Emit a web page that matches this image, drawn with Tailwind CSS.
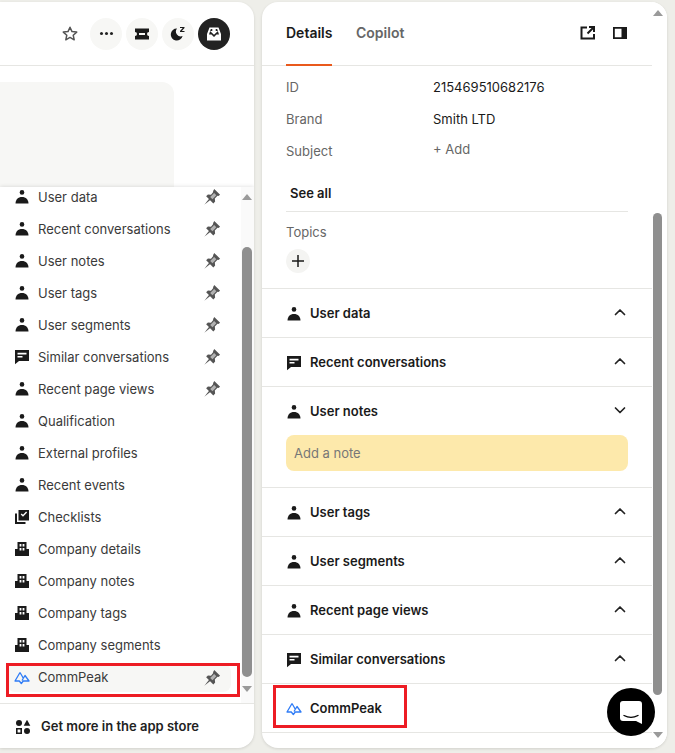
<!doctype html>
<html>
<head>
<meta charset="utf-8">
<title>Conversation details</title>
<script src="https://cdn.jsdelivr.net/npm/@tailwindcss/browser@4"></script>
</head>
<body class="w-[675px] h-[753px] overflow-hidden bg-[#eeeee9] font-['Inter',sans-serif] text-[13px] text-[#1a1a1a]">

<!-- icon sprites -->
<svg class="hidden">
  <symbol id="person" viewBox="0 0 16 16"><circle cx="8" cy="3.400" r="2.300"/><path d="M1.500 14.500c0-3.800 2.600-6.500 6.500-6.500s6.500 2.700 6.500 6.500z"/></symbol>
  <symbol id="chat" viewBox="0 0 16 16"><path fill-rule="evenodd" d="M1 1h14v11H5l-4 3.300zM3.500 3.800v1.600h9V3.800zm0 3.200v1.600h5V7z"/></symbol>
  <symbol id="company" viewBox="0 0 16 16"><path fill-rule="evenodd" d="M3.500 1h9v7H15v7H1V8h2.500zM5.600 3v2.400h1.800V3zm3 0v2.400h1.800V3zM5.600 7v2.400h1.800V7zm3 0v2.400h1.800V7z"/></symbol>
  <symbol id="check" viewBox="0 0 16 16"><path fill-rule="evenodd" d="M4.500 1H15v10.500H4.500zm8.600 2.600-1-1-3.100 3.200-1.300-1.300-1 1 2.300 2.300z"/><path d="M1 4.500h2V13h8.500v2H1z"/></symbol>
  <symbol id="pin" viewBox="0 0 16 16"><path d="M10 .8l5.200 5.200-1.500 1.100-.8-.2-2.400 2.500.3 2.700-1.600 1.600-6.400-6.400 1.600-1.600 2.700.3L9.100 3.600l-.2-.8z"/><path d="M5.800 9 1.200 14.800 7 10.200z"/><path d="M9.900 4.500 6.400 8l2 2 3.500-3.500z" fill="#fff" fill-opacity=".55"/></symbol>
  <symbol id="peak" viewBox="0 0 16 16"><path fill="none" stroke="#2f7cf6" stroke-width="1.300" stroke-linejoin="round" d="M6 2.500 1 11h4.300l2 2.500 2-2.500H15l-4-5.500-3 5M6 2.500l3.500 6"/></symbol>
  <symbol id="up" viewBox="0 0 16 16"><path fill="none" stroke="currentColor" stroke-width="1.700" stroke-linecap="round" stroke-linejoin="round" d="M3.500 10.500 8 6l4.500 4.500"/></symbol>
  <symbol id="down" viewBox="0 0 16 16"><path fill="none" stroke="currentColor" stroke-width="1.700" stroke-linecap="round" stroke-linejoin="round" d="M3.500 6 8 10.500 12.500 6"/></symbol>
</svg>

<div class="flex h-[753px] pt-[2px] pb-[5px]">

  <!-- conversation column -->
  <div class="relative w-[254px] h-[746px] bg-white rounded-r-2xl overflow-hidden shadow-[0_1px_3px_rgba(0,0,0,0.12)]">
    <div class="h-[64px] border-b border-[#e6e6e3] flex items-center justify-end gap-1 pr-6">
      <svg class="w-4 h-4 mr-2 mt-[1px]" viewBox="0 0 16 16" fill="none" stroke="#555" stroke-width="1.500" stroke-linejoin="round"><path d="M8 1.300l2 4.300 4.700.5-3.500 3.100 1 4.600L8 11.400l-4.200 2.400 1-4.600-3.500-3.100 4.700-.5z"/></svg>
      <div class="w-8 h-8 rounded-full bg-[#f7f7f5] flex items-center justify-center gap-[2px]">
        <span class="w-[3px] h-[3px] rounded-full bg-[#222]"></span><span class="w-[3px] h-[3px] rounded-full bg-[#222]"></span><span class="w-[3px] h-[3px] rounded-full bg-[#222]"></span>
      </div>
      <div class="w-8 h-8 rounded-full bg-[#f7f7f5] flex items-center justify-center">
        <svg class="w-4 h-4" viewBox="0 0 16 16" fill="#1a1a1a"><path fill-rule="evenodd" d="M1 2.500h14v3.500a2 2 0 0 0 0 4v3.500H1V10a2 2 0 0 0 0-4zM5 7v2h6V7z"/></svg>
      </div>
      <div class="w-8 h-8 rounded-full bg-[#f7f7f5] flex items-center justify-center">
        <svg class="w-4 h-4" viewBox="0 0 16 16" fill="#1a1a1a"><path d="M7 2.600A6 6 0 1 0 12.600 10 4.800 4.800 0 0 1 7 2.600z"/><path d="M10 1h4.500v1.100l-2.700 2.800h2.700V6H10V4.900l2.700-2.800H10z"/></svg>
      </div>
      <div class="w-8 h-8 rounded-full bg-[#222] flex items-center justify-center">
        <svg class="w-4 h-4" viewBox="0 0 16 16" fill="#fff"><path fill-rule="evenodd" d="M3.500 1.500h9L15 8v6.500H1V8zM4.800 3 3 8.500h2.500L8 11l2.500-2.500H13L11.200 3z"/><path d="M6.300 2.500h3.400V5H12L8 8.800 4 5h2.300z"/></svg>
      </div>
    </div>
    <div class="w-[174px] h-[300px] mt-[16px] bg-[#f7f7f5] rounded-r-xl"></div>

    <!-- apps popover -->
    <div class="absolute left-0 right-0 top-[185px] bottom-0 bg-white rounded-br-2xl shadow-[0_0_4px_rgba(0,0,0,0.15)] flex flex-col">
      <div class="h-[516px] flex overflow-hidden">
        <ul class="w-[241px] -mt-[5px] pl-[7px] pr-[10px] shrink-0">
          <li class="h-8 flex items-center pl-[7px] pr-[10px] text-[#3a3a3a]"><svg class="w-4 h-4 -mt-[3px] mr-[8px] fill-[#1a1a1a]"><use href="#person"/></svg><span class="flex-1">User data</span><svg class="w-[18px] h-[18px] -mt-[3px] fill-[#555]"><use href="#pin"/></svg></li>
          <li class="h-8 flex items-center pl-[7px] pr-[10px] text-[#3a3a3a]"><svg class="w-4 h-4 -mt-[3px] mr-[8px] fill-[#1a1a1a]"><use href="#person"/></svg><span class="flex-1">Recent conversations</span><svg class="w-[18px] h-[18px] -mt-[3px] fill-[#555]"><use href="#pin"/></svg></li>
          <li class="h-8 flex items-center pl-[7px] pr-[10px] text-[#3a3a3a]"><svg class="w-4 h-4 -mt-[3px] mr-[8px] fill-[#1a1a1a]"><use href="#person"/></svg><span class="flex-1">User notes</span><svg class="w-[18px] h-[18px] -mt-[3px] fill-[#555]"><use href="#pin"/></svg></li>
          <li class="h-8 flex items-center pl-[7px] pr-[10px] text-[#3a3a3a]"><svg class="w-4 h-4 -mt-[3px] mr-[8px] fill-[#1a1a1a]"><use href="#person"/></svg><span class="flex-1">User tags</span><svg class="w-[18px] h-[18px] -mt-[3px] fill-[#555]"><use href="#pin"/></svg></li>
          <li class="h-8 flex items-center pl-[7px] pr-[10px] text-[#3a3a3a]"><svg class="w-4 h-4 -mt-[3px] mr-[8px] fill-[#1a1a1a]"><use href="#person"/></svg><span class="flex-1">User segments</span><svg class="w-[18px] h-[18px] -mt-[3px] fill-[#555]"><use href="#pin"/></svg></li>
          <li class="h-8 flex items-center pl-[7px] pr-[10px] text-[#3a3a3a]"><svg class="w-4 h-4 -mt-[3px] mr-[8px] fill-[#1a1a1a]"><use href="#chat"/></svg><span class="flex-1">Similar conversations</span><svg class="w-[18px] h-[18px] -mt-[3px] fill-[#555]"><use href="#pin"/></svg></li>
          <li class="h-8 flex items-center pl-[7px] pr-[10px] text-[#3a3a3a]"><svg class="w-4 h-4 -mt-[3px] mr-[8px] fill-[#1a1a1a]"><use href="#person"/></svg><span class="flex-1">Recent page views</span><svg class="w-[18px] h-[18px] -mt-[3px] fill-[#555]"><use href="#pin"/></svg></li>
          <li class="h-8 flex items-center pl-[7px] pr-[10px] text-[#3a3a3a]"><svg class="w-4 h-4 -mt-[3px] mr-[8px] fill-[#1a1a1a]"><use href="#person"/></svg><span class="flex-1">Qualification</span></li>
          <li class="h-8 flex items-center pl-[7px] pr-[10px] text-[#3a3a3a]"><svg class="w-4 h-4 -mt-[3px] mr-[8px] fill-[#1a1a1a]"><use href="#person"/></svg><span class="flex-1">External profiles</span></li>
          <li class="h-8 flex items-center pl-[7px] pr-[10px] text-[#3a3a3a]"><svg class="w-4 h-4 -mt-[3px] mr-[8px] fill-[#1a1a1a]"><use href="#person"/></svg><span class="flex-1">Recent events</span></li>
          <li class="h-8 flex items-center pl-[7px] pr-[10px] text-[#3a3a3a]"><svg class="w-4 h-4 -mt-[3px] mr-[8px] fill-[#1a1a1a]"><use href="#check"/></svg><span class="flex-1">Checklists</span></li>
          <li class="h-8 flex items-center pl-[7px] pr-[10px] text-[#3a3a3a]"><svg class="w-4 h-4 -mt-[3px] mr-[8px] fill-[#1a1a1a]"><use href="#company"/></svg><span class="flex-1">Company details</span></li>
          <li class="h-8 flex items-center pl-[7px] pr-[10px] text-[#3a3a3a]"><svg class="w-4 h-4 -mt-[3px] mr-[8px] fill-[#1a1a1a]"><use href="#company"/></svg><span class="flex-1">Company notes</span></li>
          <li class="h-8 flex items-center pl-[7px] pr-[10px] text-[#3a3a3a]"><svg class="w-4 h-4 -mt-[3px] mr-[8px] fill-[#1a1a1a]"><use href="#company"/></svg><span class="flex-1">Company tags</span></li>
          <li class="h-8 flex items-center pl-[7px] pr-[10px] text-[#3a3a3a]"><svg class="w-4 h-4 -mt-[3px] mr-[8px] fill-[#1a1a1a]"><use href="#company"/></svg><span class="flex-1">Company segments</span></li>
          <li class="h-[28px] mt-[2px] flex items-center pl-[7px] pr-[10px] text-[#3a3a3a] bg-[#f7f7f5] rounded-lg"><svg class="w-4 h-4 -mt-[1px] mr-[8px]"><use href="#peak"/></svg><span class="flex-1">CommPeak</span><svg class="w-[18px] h-[18px] -mt-[1px] fill-[#555]"><use href="#pin"/></svg></li>
        </ul>
        <!-- popover scrollbar -->
        <div class="relative flex-1 bg-[#fafafa]">
          <span class="absolute left-[1px] top-[7px] w-0 h-0 border-x-[5px] border-x-transparent border-b-[6px] border-b-[#9a9a9a]"></span>
          <span class="absolute left-[1px] top-[60px] w-[10px] h-[430px] rounded-full bg-[#8f8f8f]"></span>
          <span class="absolute left-[1px] top-[499px] w-0 h-0 border-x-[5px] border-x-transparent border-t-[6px] border-t-[#9a9a9a]"></span>
        </div>
      </div>
      <div class="border-t border-[#e6e6e3] flex-1 flex items-center pl-[15px] pt-[1px]">
        <svg class="w-4 h-4 mr-[10px]" viewBox="0 0 16 16" fill="#1a1a1a"><circle cx="4" cy="4" r="3"/><path d="M12 .8l3.300 6h-6.600z"/><path fill-rule="evenodd" d="M1 9h6v6H1zm1.600 1.600v2.800h2.800v-2.800z"/><circle cx="12" cy="12" r="3"/></svg>
        <span class="font-semibold text-[#222]">Get more in the app store</span>
      </div>
    </div>

    <!-- annotation -->
    <div class="absolute left-[6px] top-[661px] w-[234px] h-[34px] border-[3px] border-[#ed1c24]"></div>
  </div>

  <!-- details column -->
  <div class="relative ml-2 w-[405px] h-[746px] bg-white rounded-2xl overflow-hidden shadow-[0_1px_3px_rgba(0,0,0,0.12)]">
    <div class="w-[390px]">
      <!-- tabs -->
      <div class="h-[64px] border-b border-[#e6e6e3] flex pl-6 pr-[24px] text-sm font-semibold">
        <div class="h-[64px] pt-[21px] border-b-2 border-[#e9591c] w-[46px]">Details</div>
        <div class="pt-[21px] ml-6 text-[#666]">Copilot</div>
        <div class="ml-auto flex items-center gap-4 pb-[2px]">
          <svg class="w-4 h-4" viewBox="0 0 16 16" fill="none" stroke="#1a1a1a" stroke-width="2"><path d="M7 2.500H1.500v11h12.500V9"/><path d="M7.500 8.500 13 3M9 2h5v5"/></svg>
          <svg class="w-4 h-4" viewBox="0 0 16 16" fill="#1a1a1a"><path fill-rule="evenodd" d="M1 2h14v12H1zm1.800 1.800v8.400h6.700V3.800z"/></svg>
        </div>
      </div>

      <!-- attributes -->
      <dl class="pl-6 pt-[6px] text-[#1a1a1a]">
        <div class="h-8 flex items-center"><dt class="w-[147px] text-[#666]">ID</dt><dd>215469510682176</dd></div>
        <div class="h-8 flex items-center"><dt class="w-[147px] text-[#666]">Brand</dt><dd>Smith LTD</dd></div>
        <div class="h-8 flex items-center"><dt class="w-[147px] text-[#666]">Subject</dt><dd class="text-[#666] -mt-1">+ Add</dd></div>
      </dl>
      <div class="mx-6 w-[342px] h-[44px] border-b border-[#e6e6e3] pl-1 pt-[16px] font-semibold">See all</div>
      <div class="pl-6 pt-[11px] h-[77px] border-b border-[#e6e6e3]">
        <div class="text-[#666]">Topics</div>
        <div class="mt-[6px] w-6 h-6 rounded-full bg-[#f4f4f2] flex items-center justify-center">
          <svg class="w-4 h-4" viewBox="0 0 16 16" stroke="#1a1a1a" stroke-width="1.500"><path d="M8 2v12M2 8h12"/></svg>
        </div>
      </div>

      <!-- sections -->
      <section class="h-[49px] pt-[2px] border-b border-[#e6e6e3] flex items-center pl-6 pr-6 font-semibold"><svg class="w-4 h-4 mr-2 fill-[#1a1a1a]"><use href="#person"/></svg><span class="flex-1">User data</span><svg class="w-4 h-4 -mt-[5px] text-[#222]"><use href="#up"/></svg></section>
      <section class="h-[49px] pt-[2px] border-b border-[#e6e6e3] flex items-center pl-6 pr-6 font-semibold"><svg class="w-4 h-4 mr-2 fill-[#1a1a1a]"><use href="#chat"/></svg><span class="flex-1">Recent conversations</span><svg class="w-4 h-4 -mt-[5px] text-[#222]"><use href="#up"/></svg></section>
      <section class="h-[101px] border-b border-[#e6e6e3] px-6 pt-[17px] font-semibold">
        <div class="flex items-center h-4"><svg class="w-4 h-4 mr-2 fill-[#1a1a1a]"><use href="#person"/></svg><span class="flex-1">User notes</span><svg class="w-4 h-4 -mt-[5px] text-[#222]"><use href="#down"/></svg></div>
        <div class="mt-[15px] h-9 w-[342px] pt-[2px] rounded-lg bg-[#fde9ab] flex items-center px-2 font-normal text-[#777]">Add a note</div>
      </section>
      <section class="h-[49px] pt-[2px] border-b border-[#e6e6e3] flex items-center pl-6 pr-6 font-semibold"><svg class="w-4 h-4 mr-2 fill-[#1a1a1a]"><use href="#person"/></svg><span class="flex-1">User tags</span><svg class="w-4 h-4 -mt-[5px] text-[#222]"><use href="#up"/></svg></section>
      <section class="h-[49px] pt-[2px] border-b border-[#e6e6e3] flex items-center pl-6 pr-6 font-semibold"><svg class="w-4 h-4 mr-2 fill-[#1a1a1a]"><use href="#person"/></svg><span class="flex-1">User segments</span><svg class="w-4 h-4 -mt-[5px] text-[#222]"><use href="#up"/></svg></section>
      <section class="h-[49px] pt-[2px] border-b border-[#e6e6e3] flex items-center pl-6 pr-6 font-semibold"><svg class="w-4 h-4 mr-2 fill-[#1a1a1a]"><use href="#person"/></svg><span class="flex-1">Recent page views</span><svg class="w-4 h-4 -mt-[5px] text-[#222]"><use href="#up"/></svg></section>
      <section class="h-[49px] pt-[2px] border-b border-[#e6e6e3] flex items-center pl-6 pr-6 font-semibold"><svg class="w-4 h-4 mr-2 fill-[#1a1a1a]"><use href="#chat"/></svg><span class="flex-1">Similar conversations</span><svg class="w-4 h-4 -mt-[5px] text-[#222]"><use href="#up"/></svg></section>
      <section class="h-[49px] pt-[2px] border-b border-[#e6e6e3] flex items-center pl-6 pr-6 font-semibold"><svg class="w-4 h-4 mr-2"><use href="#peak"/></svg><span class="flex-1">CommPeak</span></section>
    </div>

    <!-- details scrollbar -->
    <div class="absolute right-0 top-0 bottom-0 w-[15px] bg-white">
      <span class="absolute left-[1px] top-[8px] w-0 h-0 border-x-[5px] border-x-transparent border-b-[6px] border-b-[#9a9a9a]"></span>
      <span class="absolute left-[1px] top-[211px] w-[9px] h-[482px] rounded-full bg-[#8f8f8f]"></span>
      <span class="absolute left-[1px] top-[730px] w-0 h-0 border-x-[5px] border-x-transparent border-t-[6px] border-t-[#9a9a9a]"></span>
    </div>

    <!-- annotation -->
    <div class="absolute left-[11px] top-[683px] w-[134px] h-[43px] border-[3px] border-[#ed1c24]"></div>

    <!-- messenger launcher -->
    <div class="absolute left-[345px] top-[686px] w-12 h-12 rounded-full bg-black flex items-center justify-center">
      <svg class="w-6 h-6" viewBox="0 0 24 24"><path fill="#fff" d="M4 1h16a3 3 0 0 1 3 3v20l-6-3H4a3 3 0 0 1-3-3V4a3 3 0 0 1 3-3z"/><path fill="none" stroke="#000" stroke-width="1.400" stroke-linecap="round" d="M5 15.500c4.500 2.400 9.500 2.400 14 0"/></svg>
    </div>
  </div>
</div>
</body>
</html>
